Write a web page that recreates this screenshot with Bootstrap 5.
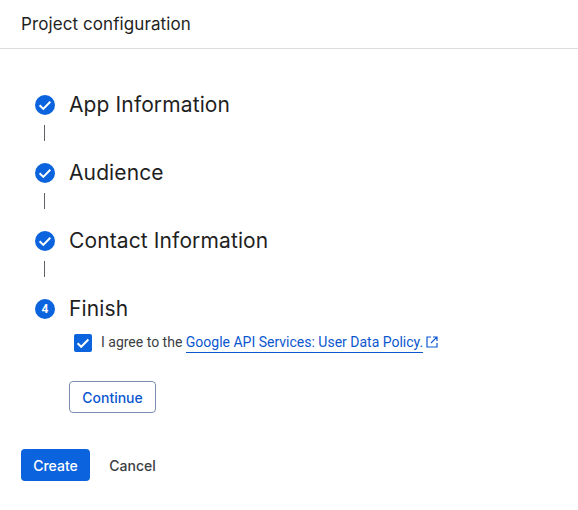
<!doctype html>
<html lang="en">
<head>
<meta charset="utf-8">
<title>Project configuration</title>
<link href="https://cdn.jsdelivr.net/npm/bootstrap@5.3.0/dist/css/bootstrap.min.css" rel="stylesheet">
<style>
body { background:#fff; color:#1f1f1f; font-family:Roboto,"Liberation Sans",sans-serif; overflow:hidden; }
.cfg-head { height:49px; padding:0 21px; border-bottom:1px solid #dadce0; font:400 17px/48px Inter,Roboto,sans-serif; letter-spacing:.09px; }
.cfg-steps { padding:38px 0 0 35px; }
.cfg-step { height:36px; gap:14px; }
.cfg-step-title { font:400 21px/36px Inter,Roboto,sans-serif; letter-spacing:.12px; margin:0; }
.cfg-dot { width:20px; height:20px; flex:none; }
.cfg-link { width:1px; height:16px; background:#5f6368; margin:2px 0 14px 9px; }
.cfg-num { fill:#fff; font:700 12px Roboto,sans-serif; }
.cfg-agree { padding-left:39px; height:20px; margin-top:6px; gap:9px; font-size:14px; line-height:20px; color:#3c4043; }
.cfg-box { width:18px; height:18px; flex:none; }
.cfg-agree-text { margin-bottom:2px; }
.cfg-agree a { color:#0b57d0; text-decoration:none; border-bottom:1px solid #0b57d0; padding-bottom:2px; }
.cfg-ext { width:12px; height:12px; margin:-2px 0 0 -6px; flex:none; }
.cfg-continue { margin:28px 0 0 34px; width:87px; height:32px; padding:0; border:1px solid #7d8fae; border-radius:4px; color:#0b57d0; background:#fff; font:500 14px Inter,Roboto,sans-serif; }
.cfg-actions { padding:36px 0 0 21px; gap:9px; }
.cfg-create { width:69px; height:32px; padding:0; border:0; border-radius:4px; background:#0b63dd; color:#fff; font:500 14px Inter,Roboto,sans-serif; }
.cfg-cancel { width:67px; height:32px; padding:0; border:0; background:none; color:#3c4043; font:500 14px Inter,Roboto,sans-serif; }
</style>
</head>
<body>
<header class="cfg-head">Project configuration</header>
<main class="cfg-steps">
  <div class="d-flex align-items-center cfg-step">
    <svg class="cfg-dot" viewBox="0 0 20 20"><circle cx="10" cy="10" r="10" fill="#0b63dd"/><path d="M4.6 10.3l3.7 3.6 7-7.1" fill="none" stroke="#fff" stroke-width="2"/></svg>
    <h2 class="cfg-step-title">App Information</h2>
  </div>
  <div class="cfg-link"></div>
  <div class="d-flex align-items-center cfg-step">
    <svg class="cfg-dot" viewBox="0 0 20 20"><circle cx="10" cy="10" r="10" fill="#0b63dd"/><path d="M4.6 10.3l3.7 3.6 7-7.1" fill="none" stroke="#fff" stroke-width="2"/></svg>
    <h2 class="cfg-step-title">Audience</h2>
  </div>
  <div class="cfg-link"></div>
  <div class="d-flex align-items-center cfg-step">
    <svg class="cfg-dot" viewBox="0 0 20 20"><circle cx="10" cy="10" r="10" fill="#0b63dd"/><path d="M4.6 10.3l3.7 3.6 7-7.1" fill="none" stroke="#fff" stroke-width="2"/></svg>
    <h2 class="cfg-step-title">Contact Information</h2>
  </div>
  <div class="cfg-link"></div>
  <div class="d-flex align-items-center cfg-step">
    <svg class="cfg-dot" viewBox="0 0 20 20"><circle cx="10" cy="10" r="10" fill="#0b63dd"/><text class="cfg-num" x="10" y="14.3" text-anchor="middle">4</text></svg>
    <h2 class="cfg-step-title">Finish</h2>
  </div>
  <div class="d-flex align-items-center cfg-agree">
    <svg class="cfg-box" viewBox="0 0 18 18"><rect width="18" height="18" rx="2" fill="#0b63dd"/><path d="M3.6 9.2l3.6 3.6 7.2-7.3" fill="none" stroke="#fff" stroke-width="2"/></svg>
    <span class="text-nowrap cfg-agree-text">I agree to the <a href="#">Google API Services: User Data Policy.</a></span>
    <svg class="cfg-ext" viewBox="0 0 12 12" fill="none" stroke="#0b57d0" stroke-width="1.2"><path d="M5 1H1v10h10V7M7 1h4v4M10.8 1.2L5 7"/></svg>
  </div>
  <button type="button" class="btn d-block cfg-continue">Continue</button>
</main>
<div class="d-flex cfg-actions">
  <button type="button" class="btn cfg-create">Create</button>
  <button type="button" class="btn cfg-cancel">Cancel</button>
</div>
<script src="https://cdn.jsdelivr.net/npm/bootstrap@5.3.0/dist/js/bootstrap.bundle.min.js"></script>
</body>
</html>
